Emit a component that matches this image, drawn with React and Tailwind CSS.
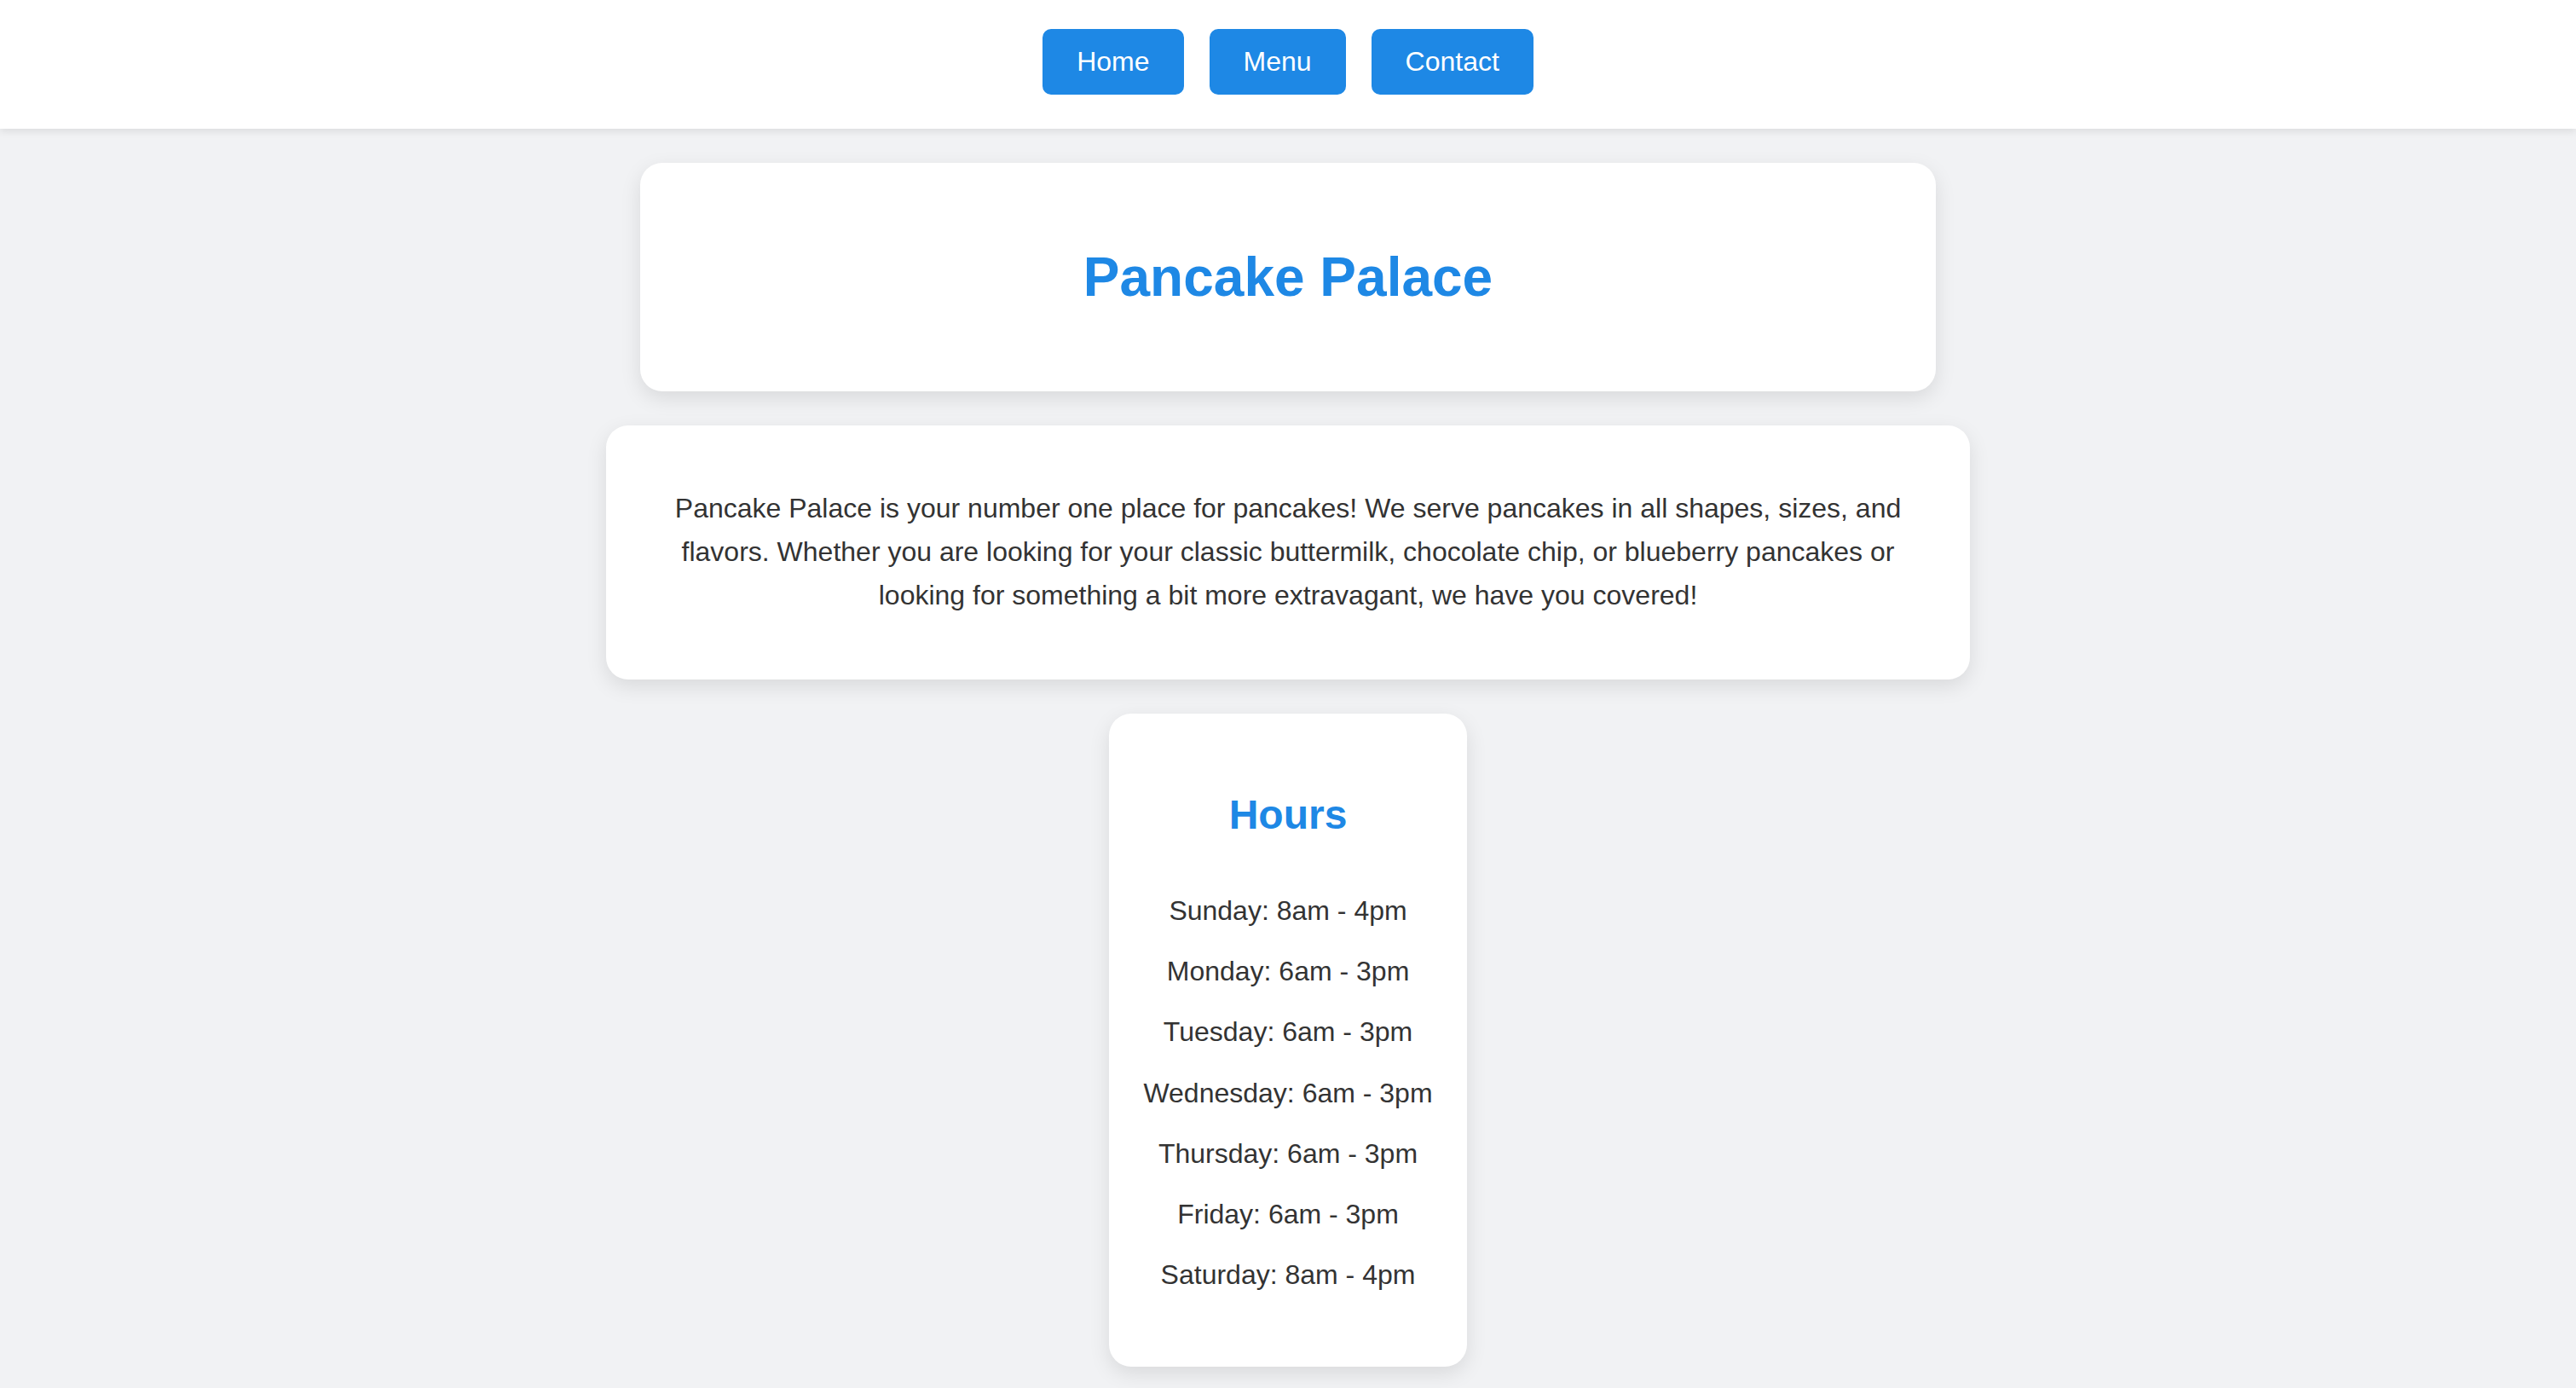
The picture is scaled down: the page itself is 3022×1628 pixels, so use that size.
const HOURS = [
	"Sunday: 8am - 4pm",
	"Monday: 6am - 3pm",
	"Tuesday: 6am - 3pm",
	"Wednesday: 6am - 3pm",
	"Thursday: 6am - 3pm",
	"Friday: 6am - 3pm",
	"Saturday: 8am - 4pm",
];

const NAV = ["Home", "Menu", "Contact"];

export default function App() {
	return (
		<div className="min-h-screen w-full bg-[#f1f2f4] text-[#333333] font-['Liberation_Sans',Arial,Helvetica,sans-serif]">
			<header className="bg-white pt-[34px] pb-[40px] shadow-[0_4px_8px_rgba(0,0,0,0.08)] flex justify-center gap-[30px]">
				{NAV.map((label) => (
					<button
						key={label}
						type="button"
						className="bg-[#1e88e5] text-white text-[32px] leading-[37px] px-[40px] py-[20px] rounded-[10px]"
					>
						{label}
					</button>
				))}
			</header>

			<main className="flex flex-col items-center gap-[40px] pt-[40px] pb-[25px]">
				<section className="w-[1520px] bg-white rounded-[26px] shadow-[0_8px_24px_rgba(0,0,0,0.1)] py-[97px] text-center">
					<h1 className="text-[64px] leading-[74px] font-bold text-[#1e88e5]">
						Pancake Palace
					</h1>
				</section>

				<section className="w-[1600px] bg-white rounded-[26px] shadow-[0_8px_24px_rgba(0,0,0,0.1)] px-[78px] py-[72px] text-center">
					<p className="text-[32px] leading-[51.2px]">
						Pancake Palace is your number one place for pancakes! We serve
						pancakes in all shapes, sizes, and flavors. Whether you are looking
						for your classic buttermilk, chocolate chip, or blueberry pancakes
						or looking for something a bit more extravagant, we have you
						covered!
					</p>
				</section>

				<section className="w-[420px] bg-white rounded-[26px] shadow-[0_8px_24px_rgba(0,0,0,0.1)] pt-[91px] pb-[88px] text-center">
					<h2 className="text-[48px] leading-[56px] font-bold text-[#1e88e5]">
						Hours
					</h2>
					<div className="mt-[65px] flex flex-col gap-[32.3px]">
						{HOURS.map((line) => (
							<p key={line} className="text-[32px] leading-[39px]">
								{line}
							</p>
						))}
					</div>
				</section>
			</main>
		</div>
	);
}
